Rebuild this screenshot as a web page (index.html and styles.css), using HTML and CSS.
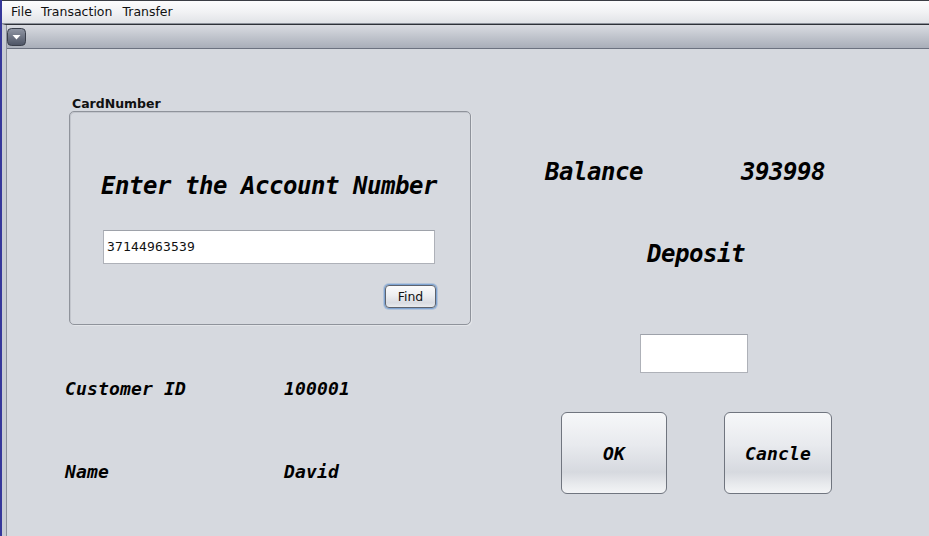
FILE: index.html
```html
<!DOCTYPE html>
<html lang="en">
<head>
<meta charset="utf-8">
<title>Deposit</title>
<link rel="stylesheet" href="styles.css">
</head>
<body>
<div class="window">
  <div class="menubar">
    <span class="menu-item">File</span>
    <span class="menu-item">Transaction</span>
    <span class="menu-item">Transfer</span>
  </div>
  <div class="frame">
    <div class="frame-inner">
      <div class="titlebar">
        <svg class="title-btn" width="19" height="18" viewBox="0 0 19 18">
          <defs>
            <linearGradient id="tb" x1="0" y1="0" x2="0" y2="1">
              <stop offset="0" stop-color="#9197a5"/>
              <stop offset="1" stop-color="#4c5364"/>
            </linearGradient>
          </defs>
          <rect x="0.5" y="0.5" width="18" height="17" rx="4" fill="url(#tb)" stroke="#3a3f4b"/>
          <path d="M5.5 7h8l-4 4.5z" fill="#ffffff"/>
        </svg>
      </div>
      <div class="content">
        <div class="left-col">
          <div class="group-title">CardNumber</div>
          <div class="group-box">
            <div class="big-label center">Enter the Account Number</div>
            <div class="card-input">37144963539</div>
            <button class="find-btn">Find</button>
          </div>
          <div class="info">
            <span class="mid-label">Customer ID</span>
            <span class="mid-label">100001</span>
            <span class="mid-label">Name</span>
            <span class="mid-label">David</span>
          </div>
        </div>
        <div class="right-col">
          <div class="balance-row">
            <span class="big-label balance-key">Balance</span>
            <span class="big-label">393998</span>
          </div>
          <div class="big-label center deposit-label">Deposit</div>
          <div class="deposit-input"></div>
          <div class="btn-row">
            <button class="big-btn ok-btn">OK</button>
            <button class="big-btn cancel-btn">Cancle</button>
          </div>
        </div>
      </div>
    </div>
  </div>
</div>
</body>
</html>
```
FILE: styles.css
```css
html, body {
  margin: 0;
  padding: 0;
  height: 536px;
  overflow: hidden;
  background: #d6d9df;
}

.window {
  height: 536px;
  border-left: 2px solid #35379a;
  box-sizing: border-box;
  display: flex;
  flex-direction: column;
  font-family: "DejaVu Sans", sans-serif;
}

.menubar {
  height: 22px;
  border-top: 1px solid #3a3d44;
  border-bottom: 1px solid #8d929b;
  background: linear-gradient(#fcfcfd, #f1f2f4 50%, #e1e3e7);
  display: flex;
  align-items: center;
  gap: 9px;
  padding-left: 9px;
  font-size: 12.5px;
  line-height: 22px;
  color: #111;
}

.menu-item:last-child {
  margin-left: 1px;
}

.frame {
  flex: 1;
  display: flex;
  border-top: 1px solid #2e3138;
  border-left: 4px solid #c7cbd3;
}

.frame-inner {
  flex: 1;
  display: flex;
  flex-direction: column;
  border-left: 1px solid #8a8f9a;
}

.titlebar {
  height: 23px;
  border-bottom: 1px solid #6c7280;
  background: linear-gradient(#dadce2, #c3c7cf 45%, #a9aeb9);
  display: flex;
  align-items: center;
  padding-left: 0;
}

.title-btn {
  display: block;
}

.content {
  flex: 1;
  display: flex;
  align-items: flex-start;
  padding: 48px 0 0 58px;
  background: #d6d9df;
}

.left-col {
  width: 405px;
  display: flex;
  flex-direction: column;
}

.group-title {
  margin-left: 7px;
  font-family: "DejaVu Sans", sans-serif;
  font-weight: bold;
  font-size: 12.5px;
  line-height: 14px;
  height: 14px;
  color: #111;
}

.group-box {
  margin-left: 4px;
  width: 402px;
  height: 214px;
  box-sizing: border-box;
  border: 1px solid #8f939b;
  border-radius: 5px;
  box-shadow: inset 1px 1px 0 #c3c6cd, 1px 1px 0 #e3e5e9;
  display: flex;
  flex-direction: column;
}

.big-label {
  font-family: "DejaVu Sans Mono", monospace;
  font-weight: bold;
  font-style: italic;
  font-size: 24px;
  line-height: 28px;
  letter-spacing: -0.45px;
  color: #000;
  white-space: nowrap;
}

.center {
  text-align: center;
}

.group-box .big-label {
  margin-top: 60px;
  padding-right: 2px;
}

.card-input {
  margin: 30px 0 0 33px;
  width: 332px;
  height: 34px;
  box-sizing: border-box;
  border: 1px solid #aeb1b8;
  border-top-color: #9ea2aa;
  background: #fff;
  padding-left: 3px;
  font-family: "DejaVu Sans Mono", monospace;
  font-size: 13px;
  letter-spacing: 0.17px;
  line-height: 32px;
  color: #111;
}

.find-btn {
  align-self: flex-end;
  margin: 21px 34px 0 0;
  width: 51px;
  height: 23px;
  box-sizing: border-box;
  padding: 0;
  border: 1px solid #5e636d;
  border-radius: 4px;
  box-shadow: 0 0 0 1px #7fa4d2, 0 0 0 2px rgba(143, 176, 214, 0.5);
  background: linear-gradient(#fbfbfc, #eceef1 45%, #d9dce2 80%, #e9ebee);
  font-family: "DejaVu Sans", sans-serif;
  font-size: 12.5px;
  color: #111;
  line-height: 21px;
}

.info {
  margin-top: 53px;
  display: grid;
  grid-template-columns: 219px auto;
  row-gap: 62px;
}

.mid-label {
  font-family: "DejaVu Sans Mono", monospace;
  font-weight: bold;
  font-style: italic;
  font-size: 18px;
  line-height: 21px;
  letter-spacing: 0.16px;
  color: #000;
  white-space: nowrap;
}

.right-col {
  margin-left: 75px;
  margin-top: 61px;
  width: 300px;
  display: flex;
  flex-direction: column;
}

.balance-row {
  display: flex;
}

.balance-key {
  width: 196px;
}

.deposit-label {
  margin-top: 54px;
  padding-left: 2px;
}

.deposit-input {
  margin: 66px 0 0 95px;
  width: 108px;
  height: 39px;
  box-sizing: border-box;
  border: 1px solid #aeb1b8;
  border-top-color: #9ea2aa;
  background: #fff;
}

.btn-row {
  margin: 39px 0 0 16px;
  display: flex;
  gap: 57px;
}

.big-btn {
  height: 82px;
  box-sizing: border-box;
  padding: 0;
  border: 1px solid #70757f;
  border-radius: 6px;
  background: linear-gradient(#f6f7f9 0%, #e8eaee 40%, #d6d9df 74%, #e9ebee 90%, #f3f4f6 100%);
  font-family: "DejaVu Sans Mono", monospace;
  font-weight: bold;
  font-style: italic;
  font-size: 18px;
  letter-spacing: 0.16px;
  color: #000;
}

.ok-btn {
  width: 106px;
}

.cancel-btn {
  width: 108px;
}
```
